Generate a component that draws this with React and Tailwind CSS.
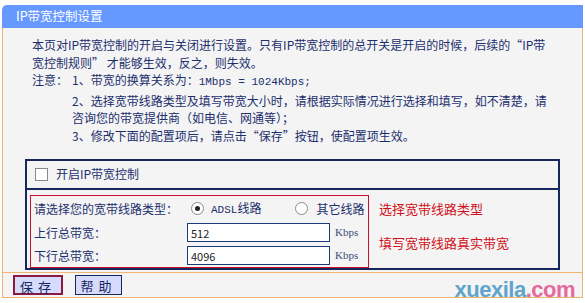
import { useState } from "react";

const font = "font-['SimSun','Noto_Sans_CJK_SC',sans-serif]";

const Radio = ({ checked }) => (
  <span className="inline-flex h-[13px] w-[13px] items-center justify-center rounded-full border border-[#8a8a8a] bg-white">
    {checked && <span className="h-[5px] w-[5px] rounded-full bg-[#222]" />}
  </span>
);

const BandwidthSettings = () => {
  const [enabled, setEnabled] = useState(false);
  const [lineType, setLineType] = useState("adsl");
  const [up, setUp] = useState("512");
  const [down, setDown] = useState("4096");

  return (
    <div className={`relative h-[303px] w-[585px] overflow-hidden bg-white pt-[5px] text-[12px] text-[#1c2f6e] ${font}`}>
      <div className="ml-[2px] w-[581px]">
        {/* Title bar */}
        <div className="flex h-[23px] items-center rounded-tl-[5px] bg-[#6699ff] pl-[14px] text-[12.5px] text-white">
          IP带宽控制设置
        </div>

        {/* Body */}
        <div className="h-[244px] border-x border-[#f2b36e] bg-[#f4f4f4] pt-[8px]">
          <div className="w-[548px] pl-[29px] leading-[17.6px]">
            <p>
              本页对IP带宽控制的开启与关闭进行设置。只有IP带宽控制的总开关是开启的时候，后续的“IP带宽控制规则” 才能够生效，反之，则失效。
            </p>
            <div className="flex">
              <span className="w-[40px] shrink-0">注意：</span>
              <div>
                <p>
                  1、带宽的换算关系为：
                  <span className="font-['Liberation_Mono',monospace] text-[11px]">1Mbps = 1024Kbps;</span>
                </p>
                <p>2、选择宽带线路类型及填写带宽大小时，请根据实际情况进行选择和填写，如不清楚，请咨询您的带宽提供商（如电信、网通等）；</p>
                <p>3、修改下面的配置项后，请点击“保存”按钮，使配置项生效。</p>
              </div>
            </div>
          </div>

          {/* Settings box */}
          <div className="ml-[22px] mt-[14px] w-[535px] border-2 border-[#14285e]">
            <label className="flex h-[29px] items-center gap-[8px] border-b-2 border-[#14285e] pl-[8px]">
              <input
                type="checkbox"
                checked={enabled}
                onChange={(e) => setEnabled(e.target.checked)}
                className="h-[13px] w-[13px] appearance-none border border-[#8a8a8a] bg-white"
              />
              开启IP带宽控制
            </label>

            <div className="flex items-start pl-[3px] pt-[5px]">
              <div className="h-[73px] w-[339px] border border-[#c8102e] pl-[3px]">
                <div className="flex h-[26px] items-center">
                  <span className="w-[157px]">请选择您的宽带线路类型：</span>
                  <button type="button" onClick={() => setLineType("adsl")} className="flex items-center gap-[7px]">
                    <Radio checked={lineType === "adsl"} />
                    <span>
                      <span className="font-['Liberation_Mono',monospace] text-[11px]">ADSL</span>线路
                    </span>
                  </button>
                  <button type="button" onClick={() => setLineType("other")} className="ml-[34px] flex items-center gap-[8px]">
                    <Radio checked={lineType === "other"} />
                    其它线路
                  </button>
                </div>
                <div className="mt-[1px] flex h-[20px] items-center">
                  <span className="w-[153px]">上行总带宽：</span>
                  <input
                    value={up}
                    onChange={(e) => setUp(e.target.value)}
                    className="h-[19px] w-[143px] border border-[#1c3a7a] bg-white px-[3px] text-[11px] text-[#222] outline-none"
                  />
                  <span className="ml-[5px] font-['Liberation_Serif',serif] text-[11px] text-[#3a4a7a]">Kbps</span>
                </div>
                <div className="mt-[3px] flex h-[20px] items-center">
                  <span className="w-[153px]">下行总带宽：</span>
                  <input
                    value={down}
                    onChange={(e) => setDown(e.target.value)}
                    className="h-[19px] w-[143px] border border-[#1c3a7a] bg-white px-[3px] text-[11px] text-[#222] outline-none"
                  />
                  <span className="ml-[5px] font-['Liberation_Serif',serif] text-[11px] text-[#3a4a7a]">Kbps</span>
                </div>
              </div>
              <div className="ml-[10px] text-[13px] text-[#d0101a]">
                <p className="mt-[4px]">选择宽带线路类型</p>
                <p className="mt-[15px]">填写宽带线路真实带宽</p>
              </div>
            </div>
          </div>
        </div>

        {/* Buttons */}
        <div className="flex h-[26px] items-center gap-[12px] border border-[#f2b36e] bg-[#f4f4f4] pl-[10px]">
          <button className="h-[20px] w-[50px] border-2 border-[#8a1840] bg-[#d6dafc] text-[13px] tracking-[5px] text-[#14285e]">
            保存
          </button>
          <button className="h-[20px] w-[47px] border border-[#14285e] bg-[#d6dafc] text-[13px] tracking-[5px] text-[#14285e]">
            帮助
          </button>
        </div>
      </div>

      {/* watermark */}
      <div className="absolute bottom-[-3px] right-[10px] font-['Liberation_Sans',sans-serif] text-[22px] font-bold tracking-[-0.5px] opacity-90">
        <span className="text-[#4f9cc8]">xuexila</span>
        <span className="text-[#e45a94]">.com</span>
      </div>
    </div>
  );
};

export default function App() {
  return <BandwidthSettings />;
}
